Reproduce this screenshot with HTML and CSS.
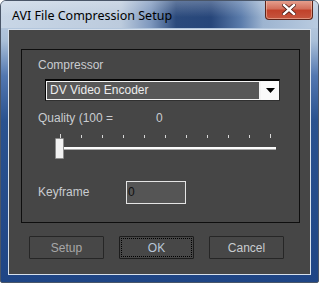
FILE: index.html
```html
<!DOCTYPE html>
<html lang="en">
<head>
  <meta charset="UTF-8">
  <title>AVI File Compression Setup</title>
  <link rel="stylesheet" href="styles.css">
</head>
<body>
  <div class="window">
    <div class="titlebar">
      <span class="title">AVI File Compression Setup</span>
      <button class="close" aria-label="Close">
        <svg width="14" height="11" viewBox="0 0 14 11">
          <path d="M2 1 L12 10 M12 1 L2 10" stroke="#4a1a14" stroke-width="4" stroke-linecap="square"/>
          <path d="M2 1 L12 10 M12 1 L2 10" stroke="#fff" stroke-width="2.4" stroke-linecap="square"/>
        </svg>
      </button>
    </div>

    <div class="client">
      <div class="group">
        <div class="label">Compressor</div>
        <div class="combo">
          <span class="combo-text">DV Video Encoder</span>
          <span class="combo-btn">
            <svg width="9" height="5" viewBox="0 0 9 5"><path d="M0 0 H9 L4.5 5 Z" fill="#000"/></svg>
          </span>
        </div>
        <div class="quality">
          <span class="label">Quality (100 =</span>
          <span class="qval">0</span>
        </div>
        <div class="slider">
          <div class="ticks">
            <span class="tick end"></span>
            <span class="tick"></span>
            <span class="tick"></span>
            <span class="tick"></span>
            <span class="tick"></span>
            <span class="tick"></span>
            <span class="tick"></span>
            <span class="tick"></span>
            <span class="tick"></span>
            <span class="tick"></span>
            <span class="tick end"></span>
          </div>
          <div class="track"><span class="thumb"></span></div>
        </div>
        <div class="keyframe">
          <span class="label">Keyframe</span>
          <div class="field">0</div>
        </div>
      </div>

      <div class="buttons">
        <button class="btn dim">Setup</button>
        <button class="btn focus">OK</button>
        <button class="btn">Cancel</button>
      </div>
    </div>
  </div>
</body>
</html>
```

FILE: styles.css
```css
body {
  margin: 0;
  font-family: 'Liberation Sans', Arial, sans-serif;
  font-size: 12px;
  background: #fff;
}
.window {
  width: 319px;
  height: 283px;
  box-sizing: border-box;
  border: 1px solid #4a5668;
  border-radius: 6px 6px 2px 2px;
  background: linear-gradient(to bottom, #c7d5e5 0, #a9bfd8 40px, #5277b0 75px, #2a528f 120px, #1f4585 100%);
  overflow: hidden;
}
.titlebar {
  height: 27px;
  display: flex;
  align-items: flex-start;
  justify-content: space-between;
  background:
    linear-gradient(to bottom, rgba(255,255,255,0.25), rgba(255,255,255,0) 60%),
    linear-gradient(to right, #c8d6e6 0, #bccbdd 120px, #7d97bd 150px, #2b4a7c 175px, #27467a 210px, #5b7cab 240px, #9db4d0 262px, #b9cbe0 100%);
}
.title {
  margin: 7px 0 0 11px;
  color: #000;
  font-family: 'Noto Sans', 'Open Sans', sans-serif;
  font-size: 12.5px;
  line-height: 16px;
}
.close {
  width: 48px;
  height: 20px;
  margin: -1px 5px 0 0;
  padding: 0;
  border: 1px solid #5e2418;
  border-top: none;
  border-radius: 0 0 4px 4px;
  background: linear-gradient(to bottom, #e7a493 0, #d3705c 45%, #c1422b 55%, #c6563f 100%);
  box-shadow: inset 0 0 0 1px rgba(255,220,200,0.45);
  display: flex;
  align-items: center;
  justify-content: center;
}
.client {
  margin: 1px 7px 0 7px;
  height: 246px;
  box-sizing: border-box;
  border: 1px solid #d6e0ec;
  background: #464646;
  padding: 19px 0 0 12px;
}
.group {
  width: 279px;
  height: 174px;
  box-sizing: border-box;
  border: 1px solid #0e0e0e;
  padding-top: 8px;
}
.label {
  color: #c9ccd0;
  line-height: 15px;
  padding-left: 16px;
}
.combo {
  margin: 6px 0 0 23px;
  width: 235px;
  height: 22px;
  box-sizing: border-box;
  display: flex;
  border-top: 2px solid #050505;
  border-left: 1px solid #050505;
  border-right: 1px solid #2c2c2c;
  border-bottom: 1px solid #303030;
}
.combo-text {
  flex: 1;
  border: 1px solid #f4f4f4;
  border-right-width: 2px;
  background: #575757;
  color: #ececec;
  padding-left: 3px;
  line-height: 16px;
}
.combo-btn {
  width: 18px;
  background: #fafafa;
  display: flex;
  align-items: center;
  justify-content: center;
}
.quality {
  margin-top: 10px;
  display: flex;
}
.quality .label {
  width: 134px;
  box-sizing: border-box;
}
.qval {
  color: #c9ccd0;
  line-height: 15px;
}
.slider {
  margin: 7px 0 0 33px;
  width: 221px;
}
.ticks {
  margin-left: 5px;
  width: 211px;
  height: 5px;
  display: flex;
  align-items: flex-end;
  justify-content: space-between;
}
.tick {
  width: 1px;
  height: 3px;
  background: #d8d8d8;
}
.tick.end {
  height: 4px;
}
.track {
  position: relative;
  margin-top: 9px;
  height: 3px;
  background: #fbfbfb;
  border-bottom: 1px solid #a8a8a8;
  box-sizing: border-box;
}
.thumb {
  position: absolute;
  left: 0;
  top: -9px;
  width: 9px;
  height: 21px;
  box-sizing: border-box;
  border: 1px solid #8e8e8e;
  border-radius: 1px;
  background: #f2f2f2;
}
.keyframe {
  margin-top: 31px;
  display: flex;
  align-items: center;
}
.keyframe .label {
  width: 88px;
}
.field {
  width: 60px;
  height: 23px;
  box-sizing: border-box;
  border: 1px solid #e4e4e4;
  background: #555;
  color: #111;
  padding-left: 1px;
  line-height: 20px;
}
.buttons {
  margin: 13px 0 0 8px;
  display: flex;
  gap: 15px;
}
.btn {
  width: 75px;
  height: 23px;
  border: 1px solid #262626;
  border-radius: 1px;
  background: #474747;
  color: #c9ccd0;
  font-family: 'Liberation Sans', Arial, sans-serif;
  font-size: 12px;
  padding: 0;
}
.btn.dim {
  color: #a8a8a8;
}
.btn.focus {
  border-color: #1c1c1c;
  color: #b8c6d8;
  outline: 1px dotted #000;
  outline-offset: -3px;
}
```
